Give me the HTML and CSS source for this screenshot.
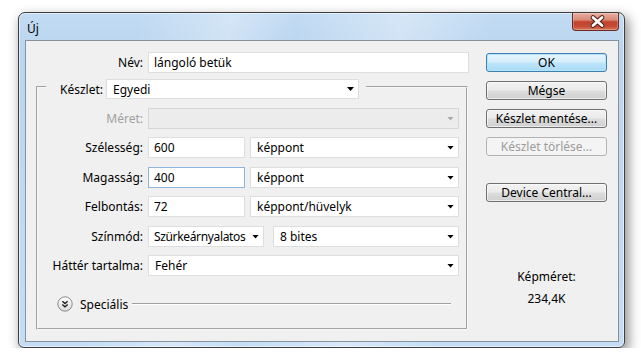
FILE: index.html
```html
<!DOCTYPE html>
<html lang="hu">
<head>
<meta charset="utf-8">
<title>Új</title>
<link rel="stylesheet" href="styles.css">
</head>
<body>
<div class="window">
  <div class="titlebar">
    <span class="title">Új</span>
    <button class="close" aria-label="Bezárás">
      <svg width="45" height="17" viewBox="0 0 45 17">
        <path d="M20 4.5 L29 12.5 M29 4.5 L20 12.5" stroke="#4a1d16" stroke-width="4.8" stroke-linecap="round" fill="none"/>
        <path d="M20 4.5 L29 12.5 M29 4.5 L20 12.5" stroke="#fff" stroke-width="2.8" stroke-linecap="round" fill="none"/>
      </svg>
    </button>
  </div>
  <div class="client">
    <div class="left">
      <div class="name-row">
        <span class="name-label">Név:</span>
        <div class="field name-field">lángoló betük</div>
      </div>
      <fieldset class="group">
        <legend class="preset">
          <div class="preset-inner">
            <span class="preset-label">Készlet:</span>
            <div class="field select preset-select"><span>Egyedi</span><i class="arrow"></i></div>
          </div>
        </legend>
        <div class="rows">
          <span class="lbl disabled">Méret:</span>
          <div class="field select select-disabled"><span></span><i class="arrow arrow-disabled"></i></div>

          <span class="lbl">Szélesség:</span>
          <div class="pair">
            <div class="field num">600</div>
            <div class="field select unit"><span>képpont</span><i class="arrow"></i></div>
          </div>

          <span class="lbl">Magasság:</span>
          <div class="pair">
            <div class="field num focused">400</div>
            <div class="field select unit"><span>képpont</span><i class="arrow"></i></div>
          </div>

          <span class="lbl">Felbontás:</span>
          <div class="pair">
            <div class="field num">72</div>
            <div class="field select unit"><span>képpont/hüvelyk</span><i class="arrow"></i></div>
          </div>

          <span class="lbl">Színmód:</span>
          <div class="pair pair-wide">
            <div class="field select mode"><span class="mode-text">Szürkeárnyalatos</span><i class="arrow"></i></div>
            <div class="field select depth"><span>8 bites</span><i class="arrow"></i></div>
          </div>

          <span class="lbl">Háttér tartalma:</span>
          <div class="field select"><span>Fehér</span><i class="arrow"></i></div>
        </div>
        <div class="advanced">
          <span class="adv-icon">
            <svg width="16" height="16" viewBox="0 0 16 16">
              <defs>
                <linearGradient id="g" x1="0" y1="0" x2="0" y2="1">
                  <stop offset="0" stop-color="#ffffff"/>
                  <stop offset="1" stop-color="#dadada"/>
                </linearGradient>
              </defs>
              <circle cx="8" cy="8" r="7.2" fill="url(#g)" stroke="#8a8a8a" stroke-width="1"/>
              <path d="M5.3 5.2 L8 7.6 L10.7 5.2 M5.3 8.4 L8 10.8 L10.7 8.4" stroke="#1e1e1e" stroke-width="1.3" fill="none"/>
            </svg>
          </span>
          <span class="adv-text">Speciális</span>
          <span class="adv-line"></span>
        </div>
      </fieldset>
    </div>
    <div class="buttons">
      <button class="btn btn-default">OK</button>
      <button class="btn">Mégse</button>
      <button class="btn">Készlet mentése...</button>
      <button class="btn btn-disabled">Készlet törlése...</button>
      <button class="btn btn-device">Device Central...</button>
      <div class="size-info">
        <div class="size-label">Képméret:</div>
        <div class="size-value">234,4K</div>
      </div>
    </div>
  </div>
</div>
</body>
</html>
```
FILE: styles.css
```css
body {
  margin: 0;
  background: #ffffff;
  font-family: "Noto Sans", "DejaVu Sans", sans-serif;
  font-size: 12px;
  color: #000;
}

.window {
  box-sizing: border-box;
  width: 607px;
  height: 336px;
  margin: 12px 0 0 18px;
  border: 1px solid #3e3e3e;
  border-radius: 7px 7px 6px 6px;
  padding: 0 5px 5px 6px;
  display: flex;
  flex-direction: column;
  background:
    linear-gradient(100deg, rgba(255,255,255,0) 18%, rgba(255,255,255,0.3) 32%, rgba(255,255,255,0) 42%, rgba(255,255,255,0.32) 58%, rgba(255,255,255,0) 72%),
    linear-gradient(#c2dbf3, #bad5ef 12%, #c5ddf4 100%);
  box-shadow: 3px 5px 12px 1px rgba(0,0,0,0.42), inset 0 0 0 1px rgba(255,255,255,0.55);
}

.titlebar {
  height: 27px;
  display: flex;
  justify-content: space-between;
  align-items: flex-start;
  padding-left: 2px;
}

.title {
  padding-top: 4px;
  line-height: 24px;
  font-size: 12px;
  color: #000;
}

.close {
  width: 47px;
  height: 18px;
  padding: 0;
  margin: 0;
  display: block;
  border: 1px solid #6b2a20;
  border-top: none;
  border-radius: 0 0 4px 4px;
  background: linear-gradient(#e9b0a1, #d98a76 40%, #c2442d 52%, #c44b34 78%, #d77b63);
  box-shadow: inset 0 0 0 1px rgba(255,255,255,0.25);
}

.close svg {
  display: block;
}

.client {
  box-sizing: border-box;
  height: 302px;
  border: 1px solid #86929e;
  background: #f0f0f0;
  display: flex;
  gap: 17px;
  padding: 11px 11px 0 0;
}

.left {
  width: 443px;
}

.name-row {
  display: flex;
  align-items: center;
  gap: 5px;
}

.name-label {
  width: 117px;
  text-align: right;
}

.field {
  box-sizing: border-box;
  height: 21px;
  background: #ffffff;
  border: 1px solid #dedede;
  padding: 0 5px;
  display: flex;
  align-items: center;
  white-space: nowrap;
  color: #000;
}

.name-field {
  width: 321px;
}

.group {
  box-sizing: border-box;
  width: 432px;
  min-width: 0;
  margin: 2px 0 0 10px;
  padding: 9px 0 16px 0;
  border: 2px groove #f6f6f6;
}

.preset {
  margin-left: 8px;
  padding: 4px 7px 0 14px;
}

.preset-inner {
  display: flex;
  align-items: center;
}

.preset-label {
  width: 46px;
}

.preset-select {
  width: 253px;
  height: 20px;
  padding-left: 6px;
}

.select {
  justify-content: space-between;
  padding: 0 4px 0 6px;
}

.arrow {
  display: block;
  flex: none;
  width: 7px;
  height: 4px;
  background: #000;
  clip-path: polygon(0 0, 100% 0, 50% 100%);
}

.arrow-disabled {
  background: #a8a8a8;
}

.select-disabled {
  background: #ececec;
  border-color: #d6d6d6;
}

.rows {
  display: grid;
  grid-template-columns: 105px 311px;
  grid-template-rows: 21px 22px 21px 22px 21px 21px;
  column-gap: 5px;
  row-gap: 8px;
  align-items: start;
}

.lbl {
  text-align: right;
  line-height: 21px;
  white-space: nowrap;
}

.disabled {
  color: #a0a0a0;
}

.pair {
  display: flex;
  gap: 5px;
}

.pair-wide {
  gap: 9px;
}

.num {
  width: 97px;
}

.focused {
  border-color: #8fb4de;
}

.unit {
  width: 209px;
}

.mode {
  width: 116px;
  padding-left: 5px;
}

.mode-text {
  letter-spacing: -0.35px;
}

.depth {
  width: 186px;
}

.advanced {
  display: flex;
  align-items: center;
  height: 16px;
  margin: 20px 15px 0 19px;
}

.adv-icon {
  width: 16px;
  height: 16px;
}

.adv-icon svg {
  display: block;
}

.adv-text {
  margin-left: 7px;
}

.adv-line {
  flex: 1;
  margin-left: 4px;
  border-top: 1px solid #a0a0a0;
  border-bottom: 1px solid #ffffff;
}

.buttons {
  width: 121px;
  display: flex;
  flex-direction: column;
  gap: 9px;
  margin-top: 1px;
}

.btn {
  box-sizing: border-box;
  height: 19px;
  padding: 0;
  margin: 0;
  font: inherit;
  color: #000;
  line-height: 17px;
  text-align: center;
  border: 1px solid #707070;
  border-radius: 3px;
  background: linear-gradient(#f2f2f2, #ebebeb 48%, #dddddd 52%, #cfcfcf);
  box-shadow: inset 0 0 0 1px rgba(255,255,255,0.6);
}

.btn-default {
  border-color: #3c7fb1;
  background: linear-gradient(#e5f4fc, #d6eefb 48%, #bde5fb 52%, #a9d9f4);
  box-shadow: inset 0 0 0 1px #b6e4fb;
}

.btn-disabled {
  color: #9c9c9c;
  border-color: #b4b4b4;
  background: #f4f4f4;
  box-shadow: none;
}

.btn-device {
  margin-top: 18px;
}

.size-info {
  margin-top: 58px;
  text-align: center;
  line-height: 16px;
  color: #000;
}

.size-value {
  margin-top: 6px;
}
```
